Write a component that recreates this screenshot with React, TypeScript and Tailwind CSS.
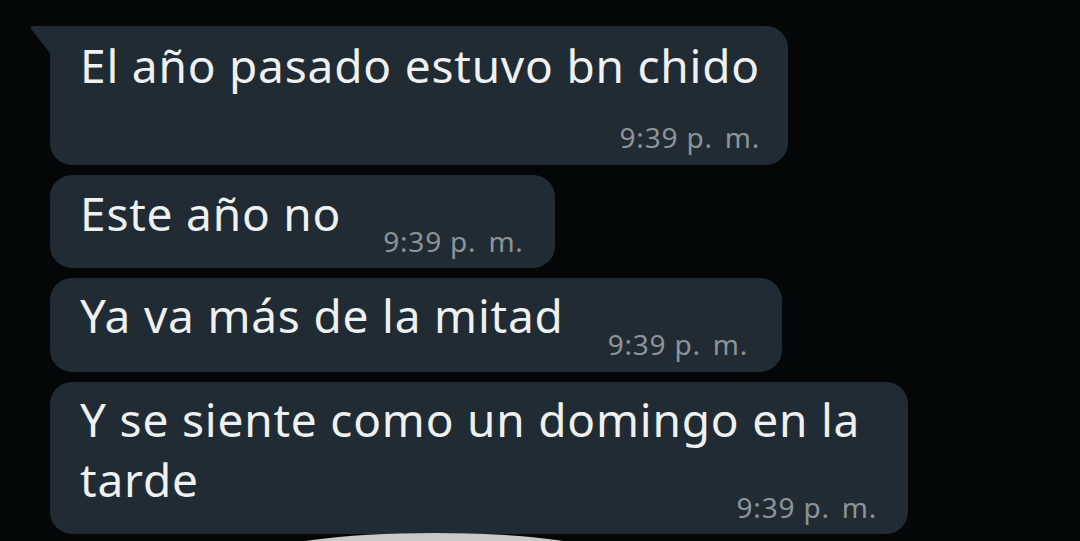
import React from "react";

const TIME = "9:39";

function Stamp() {
  return (
    <span className="whitespace-nowrap text-[28px] leading-[28px] tracking-[0.8px] text-[#8c9499]">
      {TIME} p.<span className="ml-[12px]">m.</span>
    </span>
  );
}

function Tail() {
  return (
    <svg
      viewBox="0 0 24 32"
      className="absolute left-[-20px] top-0 h-[32px] w-[24px]"
      aria-hidden
    >
      <path d="M3 0 H24 V32 L1.2 3.2 Q0 1.2 3 0 Z" fill="#202b33" />
    </svg>
  );
}

const msgText = "text-[46px] leading-[60px] tracking-[0.8px]";

export default function App() {
  return (
    <div
      className="relative flex h-[541px] w-[1080px] flex-col items-start gap-[10px] overflow-hidden bg-[#030708] pl-[50px] pt-[26px] text-[#eef1f2]"
      style={{ fontFamily: '"Noto Sans", "Open Sans", sans-serif' }}
    >
      {/* first bubble: time on its own row */}
      <div className="relative flex h-[139px] flex-col rounded-[22px] rounded-tl-none bg-[#202b33] pl-[30px] pr-[28px] pt-[9px]">
        <Tail />
        <p className={msgText}>El año pasado estuvo bn chido</p>
        <div className="mt-[28px] self-end">
          <Stamp />
        </div>
      </div>

      <div className="flex h-[93px] items-start rounded-[22px] bg-[#202b33] pl-[30px] pr-[31px] pt-[8px]">
        <p className={msgText}>Este año no</p>
        <div className="ml-[42px] mt-[44px]">
          <Stamp />
        </div>
      </div>

      <div className="flex h-[94px] items-start rounded-[22px] bg-[#202b33] pl-[30px] pr-[34px] pt-[7px]">
        <p className={msgText}>Ya va más de la mitad</p>
        <div className="ml-[44px] mt-[45px]">
          <Stamp />
        </div>
      </div>

      {/* wrapped message: last line shares its row with the time */}
      <div className="flex h-[152px] w-[858px] flex-col rounded-[22px] bg-[#202b33] pl-[30px] pr-[31px] pt-[7px]">
        <p className={msgText}>Y se siente como un domingo en la</p>
        <div className="flex items-start justify-between">
          <p className={msgText}>tarde</p>
          <div className="mt-[44px]">
            <Stamp />
          </div>
        </div>
      </div>

      {/* light shape peeking in at the bottom edge */}
      <div className="absolute bottom-[-40px] left-[262px] h-[48px] w-[345px] rounded-[50%] bg-[#c9c9cb]" />
    </div>
  );
}
